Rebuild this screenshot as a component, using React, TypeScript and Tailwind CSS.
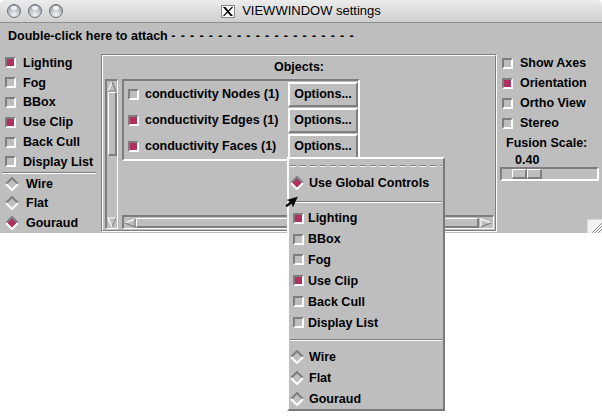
import React from "react";

function Check({ on }: { on?: boolean }) {
  return (
    <span
      className={
        on
          ? "block shrink-0 w-[11px] h-[11px] border-2 border-t-[#7e7e7e] border-l-[#7e7e7e] border-b-white border-r-white bg-[#b03060]"
          : "block shrink-0 w-[11px] h-[11px] border-2 border-t-[#7e7e7e] border-l-[#7e7e7e] border-b-white border-r-white bg-[#bebebe]"
      }
    />
  );
}

function Diamond({ on }: { on?: boolean }) {
  return (
    <svg width="14" height="14" viewBox="0 0 14 14" className="shrink-0 block">
      {on && <polygon points="7,2 12,7 7,12 2,7" fill="#b03060" />}
      <polyline points="1,7 7,1 13,7" fill="none" stroke="#7e7e7e" strokeWidth="2" />
      <polyline points="1,7 7,13 13,7" fill="none" stroke="#ffffff" strokeWidth="2" />
    </svg>
  );
}

function Light() {
  return (
    <span className="relative block w-[14px] h-[14px] rounded-full border border-[#6a6f77] bg-[radial-gradient(circle_at_50%_80%,#f2f4f6_0%,#c0c5cb_45%,#8b919a_100%)]">
      <span className="absolute top-[1px] left-[3px] w-[6px] h-[4px] rounded-full bg-white/80" />
    </span>
  );
}

function TitleBar() {
  return (
    <div className="h-[23px] flex items-center rounded-t-[5px] border-b border-b-[#8e8e8e] bg-[linear-gradient(#ececec,#cfcfcf)]">
      <div className="w-[70px] flex items-center gap-[7px] pl-[7px]">
        <Light />
        <Light />
        <Light />
      </div>
      <div className="flex-1 flex justify-center items-center gap-[7px] pr-[70px]">
        <svg width="14" height="13" viewBox="0 0 14 13" className="block">
          <rect x="0.5" y="0.5" width="13" height="12" fill="#ffffff" stroke="#8a8a8a" />
          <polygon points="2,2 4.5,2 12,11 9.5,11" fill="#000" />
          <line x1="11.5" y1="2" x2="2.5" y2="11" stroke="#000" strokeWidth="1.1" />
        </svg>
        <span className="text-[13px] leading-[16px] font-normal font-['Liberation_Sans',Arial,sans-serif]">
          VIEWWINDOW settings
        </span>
      </div>
    </div>
  );
}

function Row({ children }: { children: React.ReactNode }) {
  return <div className="h-[20px] flex items-center whitespace-nowrap">{children}</div>;
}

function LeftCol() {
  const checks: [string, boolean][] = [
    ["Lighting", true],
    ["Fog", false],
    ["BBox", false],
    ["Use Clip", true],
    ["Back Cull", false],
    ["Display List", false],
  ];
  const radios: [string, boolean][] = [
    ["Wire", false],
    ["Flat", false],
    ["Gouraud", true],
  ];
  return (
    <div className="w-[101px] shrink-0 flex flex-col pt-[1px]">
      {checks.map(([l, on]) => (
        <Row key={l}>
          <span className="ml-[5px]">
            <Check on={on} />
          </span>
          <span className="ml-[7px]">{l}</span>
        </Row>
      ))}
      <div className="ml-[2px] w-[94px] h-[2px] border-t border-t-[#7e7e7e] border-b border-b-white" />
      {radios.map(([l, on]) => (
        <Row key={l}>
          <span className="ml-[5px]">
            <Diamond on={on} />
          </span>
          <span className="ml-[7px]">{l}</span>
        </Row>
      ))}
    </div>
  );
}

function UpArrow() {
  return (
    <svg width="10" height="11" viewBox="0 0 10 11" className="block">
      <polyline points="1,10 5,1" fill="none" stroke="#fff" strokeWidth="1.2" />
      <polyline points="5,1 9,10 1,10" fill="none" stroke="#7e7e7e" strokeWidth="1.2" />
    </svg>
  );
}
function DownArrow() {
  return (
    <svg width="10" height="11" viewBox="0 0 10 11" className="block">
      <polyline points="1,1 9,1 5,10" fill="none" stroke="#fff" strokeWidth="1.2" />
      <polyline points="5,10 9,1" fill="none" stroke="#7e7e7e" strokeWidth="1.2" />
      <polyline points="1,1 5,10" fill="none" stroke="#fff" strokeWidth="1.2" />
    </svg>
  );
}
function LeftArrow() {
  return (
    <svg width="12" height="10" viewBox="0 0 12 10" className="block">
      <polyline points="11,1 1,5" fill="none" stroke="#fff" strokeWidth="1.2" />
      <polyline points="1,5 11,9 11,1" fill="none" stroke="#7e7e7e" strokeWidth="1.2" />
    </svg>
  );
}
function RightArrow() {
  return (
    <svg width="14" height="10" viewBox="0 0 14 10" className="block">
      <polyline points="2,9 2,1 12,5" fill="none" stroke="#fff" strokeWidth="1.2" />
      <polyline points="12,5 2,9" fill="none" stroke="#7e7e7e" strokeWidth="1.2" />
    </svg>
  );
}

function VScroll() {
  return (
    <div className="w-[13px] h-full shrink-0 flex flex-col items-center border-t-2 border-l-2 border-r border-b border-t-[#7e7e7e] border-l-[#7e7e7e] border-r-white border-b-white">
      <UpArrow />
      <div className="w-[9px] h-[64px] border-t border-l border-t-white border-l-white border-b-2 border-r-2 border-b-[#7e7e7e] border-r-[#7e7e7e]" />
      <div className="flex-1" />
      <DownArrow />
    </div>
  );
}

function HScroll() {
  return (
    <div className="h-[14px] w-full flex items-center border-t-2 border-l-2 border-r border-b border-t-[#7e7e7e] border-l-[#7e7e7e] border-r-white border-b-white">
      <LeftArrow />
      <div className="flex-1 h-[10px] border-t border-l border-t-white border-l-white border-b-2 border-r-2 border-b-[#7e7e7e] border-r-[#7e7e7e]" />
      <RightArrow />
    </div>
  );
}

function ObjectList() {
  const rows: [string, boolean][] = [
    ["conductivity Nodes (1)", false],
    ["conductivity Edges (1)", true],
    ["conductivity Faces (1)", true],
  ];
  return (
    <div className="w-[238px] h-[82px] flex flex-col border-2 border-t-[#7e7e7e] border-l-[#7e7e7e] border-b-white border-r-white">
      {rows.map(([l, on]) => (
        <div key={l} className="h-[26px] flex items-center whitespace-nowrap">
          <span className="ml-[4px]">
            <Check on={on} />
          </span>
          <span className="ml-[6px] flex-1">{l}</span>
          <div className="w-[70px] h-[25px] flex items-center justify-center border-2 border-t-white border-l-white border-b-[#7e7e7e] border-r-[#7e7e7e]">
            Options...
          </div>
        </div>
      ))}
    </div>
  );
}

function CenterFrame() {
  return (
    <div className="mt-[2px] w-[396px] h-[178px] shrink-0 border border-t-[#7e7e7e] border-l-[#7e7e7e] border-b-white border-r-white">
      <div className="w-full h-full flex flex-col border border-t-white border-l-white border-b-[#7e7e7e] border-r-[#7e7e7e]">
        <div className="h-[22px] flex items-center justify-center">Objects:</div>
        <div className="h-[150px] mt-px flex pl-[2px]">
          <VScroll />
          <div className="ml-[4px] w-[372px] flex flex-col">
            <ObjectList />
            <div className="mt-auto">
              <HScroll />
            </div>
          </div>
        </div>
      </div>
    </div>
  );
}

function RightCol() {
  const checks: [string, boolean][] = [
    ["Show Axes", false],
    ["Orientation", true],
    ["Ortho View", false],
    ["Stereo", false],
  ];
  return (
    <div className="flex-1 flex flex-col pt-[1px]">
      {checks.map(([l, on]) => (
        <Row key={l}>
          <span className="ml-[5px]">
            <Check on={on} />
          </span>
          <span className="ml-[7px]">{l}</span>
        </Row>
      ))}
      <div className="h-[20px] flex items-center pl-[9px]">Fusion Scale:</div>
      <div className="h-[13px] flex items-center pl-[18px]">0.40</div>
      <div className="mt-[1px] ml-[3px] w-[99px] h-[14px] flex border-2 border-t-[#7e7e7e] border-l-[#7e7e7e] border-b-white border-r-white">
        <div className="ml-[10px] flex h-full">
          <div className="w-[15px] h-full border-t border-l border-t-white border-l-white border-b-2 border-r-2 border-b-[#7e7e7e] border-r-[#7e7e7e]" />
          <div className="w-[15px] h-full border-t border-l border-t-white border-l-white border-b-2 border-r-2 border-b-[#7e7e7e] border-r-[#7e7e7e]" />
        </div>
      </div>
      <div className="mt-auto self-end w-[15px] h-[14px] bg-[#f2f2f2] border-t border-l border-t-[#d8d8d8] border-l-[#d8d8d8]">
        <svg width="14" height="13" viewBox="0 0 14 13" className="block">
          <line x1="4" y1="13" x2="14" y2="3" stroke="#8c8c8c" strokeWidth="1" />
          <line x1="7" y1="13" x2="14" y2="6" stroke="#8c8c8c" strokeWidth="1" />
          <line x1="10" y1="13" x2="14" y2="9" stroke="#8c8c8c" strokeWidth="1" />
        </svg>
      </div>
    </div>
  );
}

function MenuCheck({ label, on }: { label: string; on?: boolean }) {
  return (
    <div className="h-[21px] flex items-center whitespace-nowrap">
      <span className="ml-[4px]">
        <Check on={on} />
      </span>
      <span className="ml-[4px]">{label}</span>
    </div>
  );
}
function MenuRadio({ label, on, h20 }: { label: string; on?: boolean; h20?: boolean }) {
  return (
    <div className={h20 ? "h-[20px] flex items-center whitespace-nowrap" : "h-[21px] flex items-center whitespace-nowrap"}>
      <span className="ml-[1px]">
        <Diamond on={on} />
      </span>
      <span className="ml-[5px]">{label}</span>
    </div>
  );
}

function Menu() {
  return (
    <div className="absolute left-[287px] top-[157px] w-[158px] h-[254px] bg-[#bebebe] flex flex-col border-2 border-t-white border-l-white border-b-[#7a7a7a] border-r-[#7a7a7a] text-[12.5px] font-bold leading-[14px]">
      <div className="h-[14px] flex items-center pl-[1px]">
        <svg width="152" height="2" viewBox="0 0 152 2" className="block">
          <line x1="0" y1="0.5" x2="152" y2="0.5" stroke="#7e7e7e" strokeWidth="1" strokeDasharray="6 4" />
          <line x1="0" y1="1.5" x2="152" y2="1.5" stroke="#ffffff" strokeWidth="1" strokeDasharray="6 4" />
        </svg>
      </div>
      <MenuRadio label="Use Global Controls" on />
      <div className="h-[14px] pt-[7px]">
        <div className="mx-[1px] h-[2px] border-t border-t-[#7e7e7e] border-b border-b-white" />
      </div>
      <MenuCheck label="Lighting" on />
      <MenuCheck label="BBox" />
      <MenuCheck label="Fog" />
      <MenuCheck label="Use Clip" on />
      <MenuCheck label="Back Cull" />
      <MenuCheck label="Display List" />
      <div className="h-[13px] pt-[6px]">
        <div className="mx-[1px] h-[2px] border-t border-t-[#7e7e7e] border-b border-b-white" />
      </div>
      <div className="pt-[1px] flex flex-col">
        <MenuRadio label="Wire" />
        <MenuRadio label="Flat" />
        <MenuRadio label="Gouraud" h20 />
      </div>
    </div>
  );
}

function Cursor() {
  return (
    <svg width="15" height="14" viewBox="0 0 15 14" className="absolute left-[284px] top-[196px]">
      <g transform="translate(13.5,1) rotate(25) scale(0.9)">
        <polygon points="0,0 0,12 -3,9 -6,15 -8,14 -5,8 -9,8" fill="#000" stroke="#000" strokeWidth="0.4" />
      </g>
    </svg>
  );
}

export default function App() {
  return (
    <div className="relative w-[602px] h-[420px] overflow-hidden bg-white text-black font-['Liberation_Sans',Arial,sans-serif]">
      <div className="flex flex-col w-[602px]">
        <TitleBar />
        <div className="h-[210px] bg-[#bebebe] flex flex-col text-[12.5px] font-bold leading-[14px] overflow-hidden">
          <div className="h-[29px] pl-[8px] pt-[6px] whitespace-pre">
            Double-click here to attach{" "}
            <span className="tracking-[0.87px]">- - - - - - - - - - - - - - - - - - - -</span>
          </div>
          <div className="flex h-[181px]">
            <LeftCol />
            <CenterFrame />
            <RightCol />
          </div>
        </div>
      </div>
      <Menu />
      <Cursor />
    </div>
  );
}
